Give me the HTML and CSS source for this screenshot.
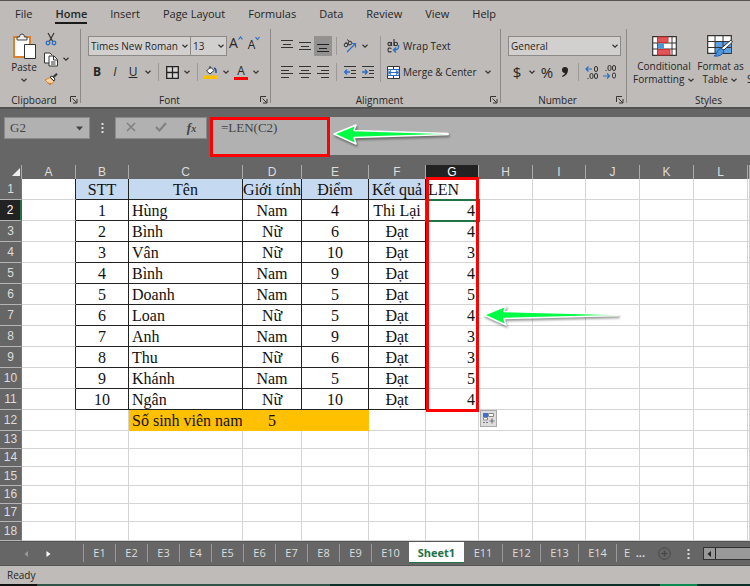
FILE: index.html
```html
<!DOCTYPE html>
<html lang="vi">
<head>
    <meta charset="UTF-8">
    <meta name="viewport" content="width=device-width, initial-scale=1.0">
    <title>LEN</title>
    <link rel="stylesheet" href="styles.css">
</head>
<body>
    <!-- shared icons -->
    <svg class="defs" width="0" height="0">
        <symbol id="caret" viewBox="0 0 8 8"><path d="M1.5 2.8 4 5.2 6.5 2.8" fill="none" stroke="#333" stroke-width="1.2"/></symbol>
        <symbol id="launcher" viewBox="0 0 8 8"><path d="M.5 6V.5H6M2.5 2.5 6.5 6.5M7 3V7H3" fill="none" stroke="#333"/></symbol>
        <symbol id="arrow" viewBox="0 0 120 26"><path d="M2 12 24 3 22 8.500 116 11.500V12.500L22 15.500 24 22Z" fill="#0f4" stroke="#fff" stroke-width="1.500" stroke-linejoin="round"/></symbol>
    </svg>

    <header class="ribbon">
        <nav class="menu">
            <a href="#">File</a>
            <a href="#" class="current">Home</a>
            <a href="#">Insert</a>
            <a href="#">Page Layout</a>
            <a href="#">Formulas</a>
            <a href="#">Data</a>
            <a href="#">Review</a>
            <a href="#">View</a>
            <a href="#">Help</a>
        </nav>
        <div class="groups">
            <section class="group clipboard">
                <div class="clip-tools">
                    <button class="big">
                        <svg width="26" height="28" viewBox="0 0 26 28">
                            <path d="M3 4H19V24H3Z" fill="#fff" stroke="#d9822b" stroke-width="2"/>
                            <path d="M6 7V4H8.500A2.500 3 0 0 1 13.500 4H16V7Z" fill="#eee" stroke="#444"/>
                            <path d="M13.500 11.500H24.500V25.500H13.500Z" fill="#fff" stroke="#333"/>
                        </svg>
                        <span>Paste</span>
                        <svg width="8" height="8"><use href="#caret"/></svg>
                    </button>
                    <div class="clip-side">
                        <button class="icon" aria-label="Cut">
                            <svg width="12" height="14" viewBox="0 0 12 14"><path d="M3 1 8 10M9 1 4 10" stroke="#333" stroke-width="1.200"/><circle cx="3" cy="11" r="1.800" fill="none" stroke="#2a6fc4" stroke-width="1.300"/><circle cx="9" cy="11" r="1.800" fill="none" stroke="#2a6fc4" stroke-width="1.300"/></svg>
                        </button>
                        <div class="row">
                            <button class="icon" aria-label="Copy">
                                <svg width="14" height="15" viewBox="0 0 14 15"><path d="M5 11H.5V1H6L8 3" fill="#fff" stroke="#333"/><path d="M5 4H10L13.500 7.500V14H5Z" fill="#fff" stroke="#333"/><path d="M9.500 4V8H13M7 10H11.500M7 12H11.500" fill="none" stroke="#333"/></svg>
                            </button>
                            <button class="drop" aria-label="Copy options"><svg width="8" height="8"><use href="#caret"/></svg></button>
                        </div>
                        <button class="icon" aria-label="Format Painter">
                            <svg width="14" height="13" viewBox="0 0 14 13"><path d="M1 7 6 4.500 10 8.500 6 12Z" fill="#f5d3a8" stroke="#d9822b"/><path d="M3 9.500 6 12 8 10Z" fill="#d9822b"/><path d="M6 4 8 3 11 6 10 8Z" fill="#fff" stroke="#333"/><path d="M9.500 4 13 .8" stroke="#333" stroke-width="2"/></svg>
                        </button>
                    </div>
                </div>
                <footer>Clipboard<button class="launch" aria-label="Clipboard settings"><svg width="8" height="8"><use href="#launcher"/></svg></button></footer>
            </section>

            <section class="group font">
                <div class="row">
                    <label class="combo name"><select aria-label="Font name"><option>Times New Roman</option></select><svg width="8" height="8"><use href="#caret"/></svg></label>
                    <label class="combo size"><select aria-label="Font size"><option>13</option></select><svg width="8" height="8"><use href="#caret"/></svg></label>
                    <button class="icon grow">A<svg width="5" height="5" viewBox="0 0 5 5"><path d="M.5 3.500 2.500 1 4.500 3.500" fill="none" stroke="#2a6fc4" stroke-width="1.200"/></svg></button>
                    <button class="icon shrink">A<svg width="5" height="5" viewBox="0 0 5 5"><path d="M.5 1 2.500 3.500 4.500 1" fill="none" stroke="#2a6fc4" stroke-width="1.200"/></svg></button>
                </div>
                <div class="row">
                    <button class="icon"><b>B</b></button>
                    <button class="icon"><i>I</i></button>
                    <button class="icon"><u>U</u></button>
                    <button class="drop" aria-label="Underline style"><svg width="8" height="8"><use href="#caret"/></svg></button>
                    <span class="sep"></span>
                    <button class="icon" aria-label="Borders">
                        <svg width="13" height="13" viewBox="0 0 13 13"><path d="M.7.7H12.300V12.300H.7ZM6.500 1V12M1 6.500H12" fill="#d8d6d5" stroke="#222" stroke-width="1.300"/></svg>
                    </button>
                    <button class="drop" aria-label="Border options"><svg width="8" height="8"><use href="#caret"/></svg></button>
                    <span class="sep"></span>
                    <button class="icon" aria-label="Fill color">
                        <svg width="14" height="14" viewBox="0 0 14 14"><path d="M2.500 6 6.500 2 10 5.500 6 9Z" fill="#fff" stroke="#333"/><path d="M6 1V4" stroke="#333"/><path d="M10 3Q12.500 4 12 8" fill="none" stroke="#1f4e9c" stroke-width="1.500"/><path d="M0 10.500H14V14H0Z" fill="#ffc000"/></svg>
                    </button>
                    <button class="drop" aria-label="Fill options"><svg width="8" height="8"><use href="#caret"/></svg></button>
                    <button class="icon color">A</button>
                    <button class="drop" aria-label="Color options"><svg width="8" height="8"><use href="#caret"/></svg></button>
                </div>
                <footer>Font<button class="launch" aria-label="Font settings"><svg width="8" height="8"><use href="#launcher"/></svg></button></footer>
            </section>

            <section class="group align">
                <div class="align-tools">
                    <div class="stack">
                        <div class="row">
                            <button class="icon" aria-label="Top align"><svg width="12" height="12" viewBox="0 0 12 12"><path d="M0 .5H12M2 4.500H10M0 7.500H12" stroke="#333"/></svg></button>
                            <button class="icon" aria-label="Middle align"><svg width="12" height="12" viewBox="0 0 12 12"><path d="M0 2.500H12M2 6.500H10M0 9.500H12" stroke="#333"/></svg></button>
                            <button class="icon pressed" aria-label="Bottom align"><svg width="12" height="12" viewBox="0 0 12 12"><path d="M0 4.500H12M2 8.500H10M0 11.500H12" stroke="#222"/></svg></button>
                            <span class="sep"></span>
                            <button class="icon" aria-label="Orientation">
                                <svg width="14" height="14" viewBox="0 0 14 14"><g fill="none" stroke="#333"><circle cx="3" cy="6" r="1.800"/><path d="M2.500 3 6 6.500"/><circle cx="7" cy="4" r="1.800"/><path d="M4 .5 7 3"/></g><path d="M4 13 12 5M8.500 4.500H12.500V8.500" fill="none" stroke="#2a6fc4" stroke-width="1.200"/></svg>
                            </button>
                            <button class="drop" aria-label="Orientation options"><svg width="8" height="8"><use href="#caret"/></svg></button>
                        </div>
                        <div class="row">
                            <button class="icon" aria-label="Align left"><svg width="12" height="12" viewBox="0 0 12 12"><path d="M0 .5H12M0 4.500H8M0 7.500H12M0 11.500H8" stroke="#333"/></svg></button>
                            <button class="icon" aria-label="Center"><svg width="12" height="12" viewBox="0 0 12 12"><path d="M0 .5H12M2 4.500H10M0 7.500H12M2 11.500H10" stroke="#333"/></svg></button>
                            <button class="icon" aria-label="Align right"><svg width="12" height="12" viewBox="0 0 12 12"><path d="M0 .5H12M4 4.500H12M0 7.500H12M4 11.500H12" stroke="#333"/></svg></button>
                            <span class="sep"></span>
                            <button class="icon" aria-label="Decrease indent"><svg width="12" height="12" viewBox="0 0 12 12"><path d="M0 .5H12M7 4.500H12M7 7.500H12M0 11.500H12" stroke="#333"/><path d="M6 6H1M3 3.500 .7 6 3 8.500" fill="none" stroke="#2a6fc4" stroke-width="1.300"/></svg></button>
                            <button class="icon" aria-label="Increase indent"><svg width="12" height="12" viewBox="0 0 12 12"><path d="M0 .5H12M7 4.500H12M7 7.500H12M0 11.500H12" stroke="#333"/><path d="M0 6H5M3 3.500 5.300 6 3 8.500" fill="none" stroke="#2a6fc4" stroke-width="1.300"/></svg></button>
                        </div>
                    </div>
                    <div class="stack wrap">
                        <button class="text">
                            <svg width="13" height="14" viewBox="0 0 13 14"><g fill="none" stroke="#333" stroke-width="1.100"><circle cx="2.500" cy="5" r="1.600"/><path d="M4.500 3V7M7 0V7"/><circle cx="8.800" cy="5" r="1.700"/><path d="M4.500 9.500Q1 8 1 11Q1 14 4.500 12.500"/></g><path d="M11.500 6Q12.500 11 7 11M9 8.500 6.500 11 9 13.500" fill="none" stroke="#2a6fc4" stroke-width="1.400"/></svg>
                            Wrap Text
                        </button>
                        <div class="row">
                            <button class="text">
                                <svg width="13" height="13" viewBox="0 0 13 13"><path d="M.5.5H12.500V12.500H.5ZM6.500 1V12" fill="#fff" stroke="#333"/><path d="M1 3.500H12V9.500H1Z" fill="#fff" stroke="#2a6fc4"/><path d="M2 6.500H11M4 4.500 2 6.500 4 8.500M9 4.500 11 6.500 9 8.500" fill="none" stroke="#2a6fc4" stroke-width="1.200"/></svg>
                                Merge &amp; Center
                            </button>
                            <button class="drop" aria-label="Merge options"><svg width="8" height="8"><use href="#caret"/></svg></button>
                        </div>
                    </div>
                </div>
                <footer>Alignment<button class="launch" aria-label="Alignment settings"><svg width="8" height="8"><use href="#launcher"/></svg></button></footer>
            </section>

            <section class="group number">
                <div class="row">
                    <label class="combo format"><select aria-label="Number format"><option>General</option></select><svg width="8" height="8"><use href="#caret"/></svg></label>
                </div>
                <div class="row">
                    <button class="icon sign">$</button>
                    <button class="drop" aria-label="Currency options"><svg width="8" height="8"><use href="#caret"/></svg></button>
                    <button class="icon sign">%</button>
                    <button class="icon" aria-label="Comma style"><svg width="8" height="12" viewBox="0 0 8 12"><path d="M4 1A3 3 0 0 1 7 4Q7 9 1.500 11L1 10Q4 8.500 4 7A3 3 0 0 1 4 1Z" fill="#222"/></svg></button>
                    <span class="sep"></span>
                    <button class="icon" aria-label="Increase decimal">
                        <svg width="14" height="14" viewBox="0 0 14 14"><path d="M7 4H1M3.500 1.500 1 4 3.500 6.500" fill="none" stroke="#2a6fc4" stroke-width="1.200"/><g fill="none" stroke="#333"><rect x="9.500" y="1.500" width="3" height="5" rx="1.500"/><rect x="9.500" y="8.500" width="3" height="5" rx="1.500"/><rect x="5" y="8.500" width="3" height="5" rx="1.500"/><path d="M2.500 13.500H3.500"/></g></svg>
                    </button>
                    <button class="icon" aria-label="Decrease decimal">
                        <svg width="14" height="14" viewBox="0 0 14 14"><path d="M0 11H6.500M4 8.500 6.500 11 4 13.500" fill="none" stroke="#2a6fc4" stroke-width="1.200"/><g fill="none" stroke="#333"><rect x="9.500" y=".5" width="3" height="5" rx="1.500"/><rect x="5" y=".5" width="3" height="5" rx="1.500"/><rect x="9.500" y="8" width="3" height="5" rx="1.500"/><path d="M2.500 5.500H3.500"/></g></svg>
                    </button>
                </div>
                <footer>Number<button class="launch" aria-label="Number settings"><svg width="8" height="8"><use href="#launcher"/></svg></button></footer>
            </section>

            <section class="group styles">
                <div class="style-tools">
                    <button class="big conditional">
                        <svg width="25" height="20" viewBox="0 0 25 20"><path d="M.7.7H24.300V19.300H.7Z" fill="#fff" stroke="#333" stroke-width="1.200"/><path d="M5.500 1V19M20 1V19M1 7H24M1 13H24" stroke="#333"/><path d="M5.500 1H16V6.500H5.500ZM5.500 13.500H18V19H5.500Z" fill="#e0555a" stroke="#c33"/><path d="M5.500 7.500H12V12.500H5.500Z" fill="#4a94dc"/></svg>
                        <span>Conditional</span>
                        <span>Formatting <svg width="8" height="8"><use href="#caret"/></svg></span>
                    </button>
                    <button class="big as-table">
                        <svg width="27" height="22" viewBox="0 0 27 22"><path d="M.7.7H24.300V18.300H.7Z" fill="#fff" stroke="#333" stroke-width="1.200"/><path d="M8 6.500H24V18H8Z" fill="#5aa0e4"/><path d="M8 1V18M16 1V18M1 6.500H24M1 12.500H24" stroke="#333"/><path d="M25.500 7 17 15 14 13.500 24 5Z" fill="#fff" stroke="#333"/><path d="M14 13.500 17 16Q15 22 7 21Q10 20 10 17Q11 13.500 14 13.500Z" fill="#4a94dc" stroke="#1f5fa8"/></svg>
                        <span>Format as</span>
                        <span>Table <svg width="8" height="8"><use href="#caret"/></svg></span>
                    </button>
                    <button class="big cell-styles" aria-label="Cell Styles">
                        <span>Styles</span>
                    </button>
                </div>
                <footer>Styles</footer>
            </section>
        </div>
    </header>

    <div class="formula-bar">
        <label class="name-box">
            <input type="text" value="G2" aria-label="Name box">
            <svg width="8" height="5" viewBox="0 0 8 5"><path d="M0 .5H7L3.500 4.500Z" fill="#444"/></svg>
        </label>
        <svg class="dots" width="3" height="10" viewBox="0 0 3 10"><path d="M.5 0H2.500V2H.5ZM.5 4H2.500V6H.5ZM.5 8H2.500V10H.5Z" fill="#ddd"/></svg>
        <div class="formula-buttons">
            <button aria-label="Cancel"><svg width="10" height="10" viewBox="0 0 10 10"><path d="M1 1 9 9M9 1 1 9" stroke="#808080" stroke-width="1.600"/></svg></button>
            <button aria-label="Enter"><svg width="12" height="10" viewBox="0 0 12 10"><path d="M1 5 4.500 8.500 11 1" fill="none" stroke="#808080" stroke-width="2"/></svg></button>
            <button class="fx">f<small>x</small></button>
        </div>
        <div class="formula">
            <input type="text" value="=LEN(C2)" aria-label="Formula">
            <svg class="arrow" width="120" height="26"><use href="#arrow"/></svg>
        </div>
    </div>

    <main class="grid">
        <table>
            <colgroup>
                <col class="w22"><col class="w54"><col class="w53"><col class="w114"><col class="w59"><col class="w67"><col class="w57"><col class="w53">
                <col class="w54"><col class="w53"><col class="w54"><col class="w54"><col class="w54"><col>
            </colgroup>
            <thead>
                <tr><th class="corner"><svg width="9" height="8" viewBox="0 0 9 8"><path d="M8 0V8H0Z" fill="#eee"/></svg></th><th>A</th><th>B</th><th>C</th><th>D</th><th>E</th><th>F</th><th class="active">G</th><th>H</th><th>I</th><th>J</th><th>K</th><th>L</th><th></th></tr>
            </thead>
            <tbody class="data">
                <tr class="title"><th>1</th><td></td><td>STT</td><td>Tên</td><td>Giới tính</td><td>Điểm</td><td>Kết quả</td><td>LEN</td><td></td><td></td><td></td><td></td><td></td><td></td></tr>
                <tr><th class="active">2</th><td></td><td>1</td><td>Hùng</td><td>Nam</td><td>4</td><td>Thi Lại</td><td class="selected">4</td><td></td><td></td><td></td><td></td><td></td><td></td></tr>
                <tr><th>3</th><td></td><td>2</td><td>Bình</td><td>Nữ</td><td>6</td><td>Đạt</td><td>4</td><td></td><td></td><td></td><td></td><td></td><td></td></tr>
                <tr><th>4</th><td></td><td>3</td><td>Vân</td><td>Nữ</td><td>10</td><td>Đạt</td><td>3</td><td></td><td></td><td></td><td></td><td></td><td></td></tr>
                <tr><th>5</th><td></td><td>4</td><td>Bình</td><td>Nam</td><td>9</td><td>Đạt</td><td>4</td><td></td><td></td><td></td><td></td><td></td><td></td></tr>
                <tr><th>6</th><td></td><td>5</td><td>Doanh</td><td>Nam</td><td>5</td><td>Đạt</td><td>5</td><td></td><td></td><td></td><td></td><td></td><td></td></tr>
                <tr><th>7</th><td></td><td>6</td><td>Loan</td><td>Nữ</td><td>5</td><td>Đạt</td><td>4</td><td></td><td></td><td></td><td></td><td></td><td></td></tr>
                <tr><th>8</th><td></td><td>7</td><td>Anh</td><td>Nam</td><td>9</td><td>Đạt</td><td>3</td><td></td><td></td><td></td><td></td><td></td><td></td></tr>
                <tr><th>9</th><td></td><td>8</td><td>Thu</td><td>Nữ</td><td>6</td><td>Đạt</td><td>3</td><td></td><td></td><td></td><td></td><td></td><td></td></tr>
                <tr><th>10</th><td></td><td>9</td><td>Khánh</td><td>Nam</td><td>5</td><td>Đạt</td><td>5</td><td></td><td></td><td></td><td></td><td></td><td></td></tr>
                <tr><th>11</th><td></td><td>10</td><td>Ngân</td><td>Nữ</td><td>10</td><td>Đạt</td><td>4</td><td></td><td></td><td></td><td></td><td></td><td></td></tr>
            </tbody>
            <tbody class="rest">
                <tr class="total"><th>12</th><td></td><td></td><td>Số sinh viên nam</td><td>5</td><td></td><td></td><td></td><td></td><td></td><td></td><td></td><td></td><td></td></tr>
                <tr><th>13</th><td></td><td></td><td></td><td></td><td></td><td></td><td></td><td></td><td></td><td></td><td></td><td></td><td></td></tr>
                <tr><th>14</th><td></td><td></td><td></td><td></td><td></td><td></td><td></td><td></td><td></td><td></td><td></td><td></td><td></td></tr>
                <tr class="tall"><th>15</th><td></td><td></td><td></td><td></td><td></td><td></td><td></td><td></td><td></td><td></td><td></td><td></td><td></td></tr>
                <tr><th>16</th><td></td><td></td><td></td><td></td><td></td><td></td><td></td><td></td><td></td><td></td><td></td><td></td><td></td></tr>
                <tr><th>17</th><td></td><td></td><td></td><td></td><td></td><td></td><td></td><td></td><td></td><td></td><td></td><td></td><td></td></tr>
                <tr class="tall"><th>18</th><td></td><td></td><td></td><td></td><td></td><td></td><td></td><td></td><td></td><td></td><td></td><td></td><td></td></tr>
            </tbody>
        </table>
        <div class="len-box"></div>
        <svg class="arrow" width="140" height="26" viewBox="0 0 140 26"><path d="M2 12 24 3 22 8.500 136 11.500V12.500L22 15.500 24 22Z" fill="#0f4" stroke="#fff" stroke-width="1.500" stroke-linejoin="round"/></svg>
        <button class="autofill" aria-label="Auto fill options">
            <svg width="13" height="13" viewBox="0 0 13 13"><path d="M1 1H6V5H1Z" fill="#3b6fd4"/><path d="M6.500 1.500H11.500V4.500H6.500ZM1.500 5.500H5.500V8H1.500Z" fill="#fff" stroke="#888"/><path d="M1 10.500H3M4 10.500H6M10 6.500V11.500M7.500 9H12.500" stroke="#777" stroke-width="1.200"/></svg>
        </button>
    </main>

    <nav class="sheets">
        <button class="go prev" aria-label="Previous sheets"><svg width="5" height="6" viewBox="0 0 5 6"><path d="M4 0V6L.5 3Z" fill="#999"/></svg></button>
        <button class="go" aria-label="Next sheets"><svg width="5" height="6" viewBox="0 0 5 6"><path d="M.5 0V6L4.500 3Z" fill="#fff"/></svg></button>
        <div class="tabs">
            <a href="#">E1</a><a href="#">E2</a><a href="#">E3</a><a href="#">E4</a><a href="#">E5</a><a href="#">E6</a><a href="#">E7</a><a href="#">E8</a><a href="#">E9</a>
            <a href="#" class="wide">E10</a><a href="#" class="open">Sheet1</a><a href="#" class="wide">E11</a><a href="#" class="wide">E12</a><a href="#" class="wide">E13</a><a href="#" class="wide">E14</a><a href="#" class="wide cut">E&nbsp; <b>...</b></a>
        </div>
        <button class="add" aria-label="New sheet"><svg width="13" height="13" viewBox="0 0 13 13"><circle cx="6.500" cy="6.500" r="5.800" fill="none" stroke="#484848"/><path d="M6.500 3.500V9.500M3.500 6.500H9.500" stroke="#484848" stroke-width="1.300"/></svg></button>
        <svg width="3" height="10" viewBox="0 0 3 10"><path d="M.5 0H2.500V2H.5ZM.5 4H2.500V6H.5ZM.5 8H2.500V10H.5Z" fill="#ddd"/></svg>
        <div class="scroll">
            <button aria-label="Scroll left"><svg width="5" height="6" viewBox="0 0 5 6"><path d="M4 0V6L.5 3Z" fill="#222"/></svg></button>
        </div>
    </nav>

    <footer class="status">Ready</footer>
    <div class="taskbar"></div>
</body>
</html>
```

FILE: styles.css
```css
* {
    box-sizing: border-box;
}
body {
    margin: 0;
    overflow: hidden;
    background: #666;
    color: #262626;
    font-family: "Open Sans", "Noto Sans", sans-serif;
    font-size: 11px;
    line-height: 14px;
}
a {
    color: inherit;
    text-decoration: none;
}
button, input, select {
    margin: 0;
    padding: 0;
    border: 0;
    border-radius: 0;
    background: none;
    color: inherit;
    font: inherit;
}
svg {
    flex: none;
}
.defs {
    position: absolute;
}

/* ribbon */
.ribbon {
    background: #bfbbb8;
    border-top: 1px solid #555;
    border-bottom: 2px solid #505050;
    overflow: hidden;
}
.menu {
    display: flex;
    gap: 23px;
    padding: 6px 15px 0;
    height: 27px;
}
.menu .current {
    height: 17px;
    border-bottom: 2px solid #1a1a1a;
    font-weight: 600;
}
.groups {
    display: flex;
    font-size: 10px;
    font-weight: 500;
}
.group {
    display: flex;
    flex-direction: column;
    flex: none;
    gap: 6px;
    height: 79px;
    padding: 8px 6px 0 7px;
    position: relative;
}
.group::after {
    content: "";
    position: absolute;
    right: 0;
    top: 1px;
    bottom: 4px;
    border-right: 1px solid #8c8987;
}
.group footer {
    margin-top: auto;
    padding-right: 14px;
    text-align: center;
}
.launch {
    position: absolute;
    right: 3px;
    bottom: 3px;
    height: 8px;
    line-height: 0;
}
.group.clipboard {
    width: 81px;
    gap: 0;
    padding-top: 1px;
}
.font {
    width: 190px;
}
.align {
    width: 230px;
}
.number {
    width: 126px;
}
.group.styles {
    width: 162px;
    padding-top: 7px;
}
.group.styles footer {
    padding-right: 0;
}
.row {
    display: flex;
    align-items: center;
    height: 20px;
}
.icon {
    display: flex;
    flex: none;
    align-items: center;
    justify-content: center;
    width: 18px;
    height: 20px;
    font-size: 12px;
}
.drop {
    display: flex;
    flex: none;
    align-items: center;
    justify-content: center;
    width: 12px;
    height: 20px;
}
.sep {
    width: 9px;
    height: 18px;
    background: linear-gradient(#9c9997, #9c9997) center / 1px 100% no-repeat;
}
.pressed {
    background: #949291;
}
.big {
    display: flex;
    flex: none;
    flex-direction: column;
    align-items: center;
    justify-content: flex-start;
    white-space: nowrap;
    line-height: 13px;
}
.clip-tools {
    display: flex;
    gap: 1px;
}
.clip-tools .big {
    width: 34px;
    padding-top: 4px;
}
.clip-tools .big span {
    margin-bottom: 2px;
}
.combo {
    display: flex;
    align-items: center;
    height: 20px;
    background: #d2d0ce;
    border: 1px solid #8c8987;
}
.combo select {
    flex: 1;
    min-width: 0;
    padding-left: 2px;
    appearance: none;
}
.combo svg {
    margin-right: 1px;
}
.name {
    width: 103px;
}
.size {
    width: 36px;
    border-left: 0;
}
.format {
    width: 113px;
}
.grow {
    align-items: flex-start;
    font-size: 14px;
}
.shrink {
    align-items: flex-start;
    line-height: 18px;
}
.color {
    flex-direction: column;
    height: 16px;
    line-height: 13px;
}
.color::after {
    content: "";
    width: 14px;
    height: 3px;
    flex: none;
    background: #f00;
}
.align-tools {
    display: flex;
}
.stack {
    display: flex;
    flex-direction: column;
    gap: 6px;
}
.wrap {
    margin-left: 3px;
    padding-left: 6px;
    border-left: 1px solid #9c9997;
}
.text {
    display: flex;
    align-items: center;
    gap: 3px;
    height: 20px;
    white-space: nowrap;
}
.wrap .drop {
    margin-left: 5px;
}
.icon.sign {
    font-size: 15px;
}
.style-tools {
    display: flex;
    gap: 2px;
}
.style-tools .big > svg {
    height: 22px;
    margin-bottom: 3px;
}
.style-tools .big span svg {
    vertical-align: middle;
}
.conditional {
    width: 60px;
}
.as-table {
    width: 49px;
}
.cell-styles {
    padding-top: 38px;
}

/* formula bar */
.formula-bar {
    display: flex;
    align-items: flex-start;
    padding: 8px 0 10px 4px;
    font-family: "Liberation Serif", serif;
    font-size: 13px;
    color: #444;
}
.name-box, .formula-buttons {
    display: flex;
    align-items: center;
    height: 22px;
    background: #b1b1b1;
    border: 1px solid #8a8a8a;
}
.name-box {
    width: 86px;
    padding: 0 5px;
}
.name-box input {
    flex: 1;
    min-width: 0;
}
.dots {
    margin: 6px 11px 0;
}
.formula-buttons {
    width: 92px;
    justify-content: space-around;
}
.fx {
    font-style: italic;
    font-weight: bold;
}
.fx small {
    font-size: 10px;
}
.formula {
    display: flex;
    flex: 1;
    align-items: flex-start;
    height: 38px;
    margin-left: 3px;
    background: #b1b1b1;
}
.formula input {
    width: 120px;
    height: 40px;
    padding: 0 0 18px 8px;
    border: 3px solid #f00;
}
.arrow {
    filter: drop-shadow(1px 2px 1px rgba(0, 0, 0, .4));
}
.formula .arrow {
    margin: 5px 0 0 2px;
}

/* sheet */
.grid {
    position: relative;
    overflow: hidden;
}
table {
    width: 100%;
    table-layout: fixed;
    border-spacing: 0;
}
.w22 { width: 22px; }
.w53 { width: 53px; }
.w54 { width: 54px; }
.w57 { width: 57px; }
.w59 { width: 59px; }
.w67 { width: 67px; }
.w114 { width: 114px; }
th, td {
    padding: 0;
    overflow: hidden;
    white-space: nowrap;
}
th {
    background: #666;
    color: #ddd;
    font: 12px/13px "Liberation Sans", sans-serif;
}
thead th {
    height: 14px;
    border-right: 1px solid #aaa;
}
.corner {
    text-align: right;
    line-height: 0;
}
tbody th {
    border-bottom: 1px solid #b5b5b5;
    border-right: 1px solid #777;
}
th.active {
    background: #222;
    color: #fff;
}
tbody th.active {
    border-right: 2px solid #217346;
}
td {
    background: #fff;
    border-right: 1px solid #d4d4d4;
    border-bottom: 1px solid #d4d4d4;
    color: #111;
    font: 16px/17px "Liberation Serif", serif;
    text-align: center;
}
.data tr, .total {
    height: 21px;
}
.rest tr {
    height: 18px;
}
.rest .tall {
    height: 19px;
}
.rest .total {
    height: 21px;
}
.data td:nth-child(n+3):nth-child(-n+7) {
    border-color: #222;
}
.data td:nth-child(2) {
    border-right-color: #222;
}
.data td:nth-child(4), .total td:nth-child(4) {
    padding-left: 3px;
    text-align: left;
}
.data td:nth-child(8) {
    padding-right: 3px;
    text-align: right;
}
.title td:nth-child(n+3):nth-child(-n+7) {
    background: #c5d9f1;
    padding: 0;
    text-align: center;
}
.data.data .title td:nth-child(8), .title td:nth-child(8) {
    padding-left: 2px;
    text-align: left;
}
.total td:nth-child(n+4):nth-child(-n+6) {
    background: #ffc000;
    border-color: #ffc000;
}
.selected {
    outline: 2px solid #217346;
    outline-offset: -1px;
}
.len-box {
    position: absolute;
    left: 426px;
    top: 12px;
    width: 53px;
    height: 235px;
    border: 3px solid #f00;
}
.grid .arrow {
    position: absolute;
    left: 482px;
    top: 138px;
}
.autofill {
    position: absolute;
    left: 480px;
    top: 245px;
    display: flex;
    align-items: center;
    justify-content: center;
    width: 17px;
    height: 17px;
    background: #ddd;
    border: 1px solid #aaa;
}

/* sheet tabs */
.sheets {
    display: flex;
    align-items: center;
    height: 25px;
    padding-left: 15px;
    border-top: 1px solid #555;
    border-bottom: 1px solid #555;
    color: #ddd;
}
.go {
    width: 22px;
    line-height: 0;
}
.tabs {
    display: flex;
    align-items: flex-start;
    height: 23px;
    margin-left: 24px;
}
.tabs a {
    width: 32px;
    height: 18px;
    margin-top: 2px;
    border-left: 1px solid #999;
    text-align: center;
    line-height: 17px;
}
.tabs .wide {
    width: 38px;
}
.tabs .open {
    width: 55px;
    height: 21px;
    margin-top: 0;
    border-left: 0;
    border-bottom: 1px solid #217346;
    background: #fff;
    color: #217346;
    font-weight: bold;
    line-height: 21px;
}
.tabs .open + a {
    border-left: 0;
}
.tabs .cut {
    width: 36px;
    white-space: nowrap;
}
.add {
    margin: 0 16px 0 6px;
    line-height: 0;
}
.scroll {
    flex: 1;
    height: 13px;
    margin-left: 13px;
    background: #999;
    border: 1px solid #333;
    border-right: 0;
}
.scroll button {
    display: flex;
    align-items: center;
    justify-content: center;
    width: 12px;
    height: 11px;
    border-right: 1px solid #222;
}

.status {
    height: 18px;
    padding: 2px 7px;
    background: #bfbbb8;
    font-size: 10px;
}
.taskbar {
    height: 2px;
    background: linear-gradient(90deg, #111 5%, #305548 5% 44%, #0c3028 44% 88%, #0a8a50 88% 93%, #0c3028 93%);
}
```
